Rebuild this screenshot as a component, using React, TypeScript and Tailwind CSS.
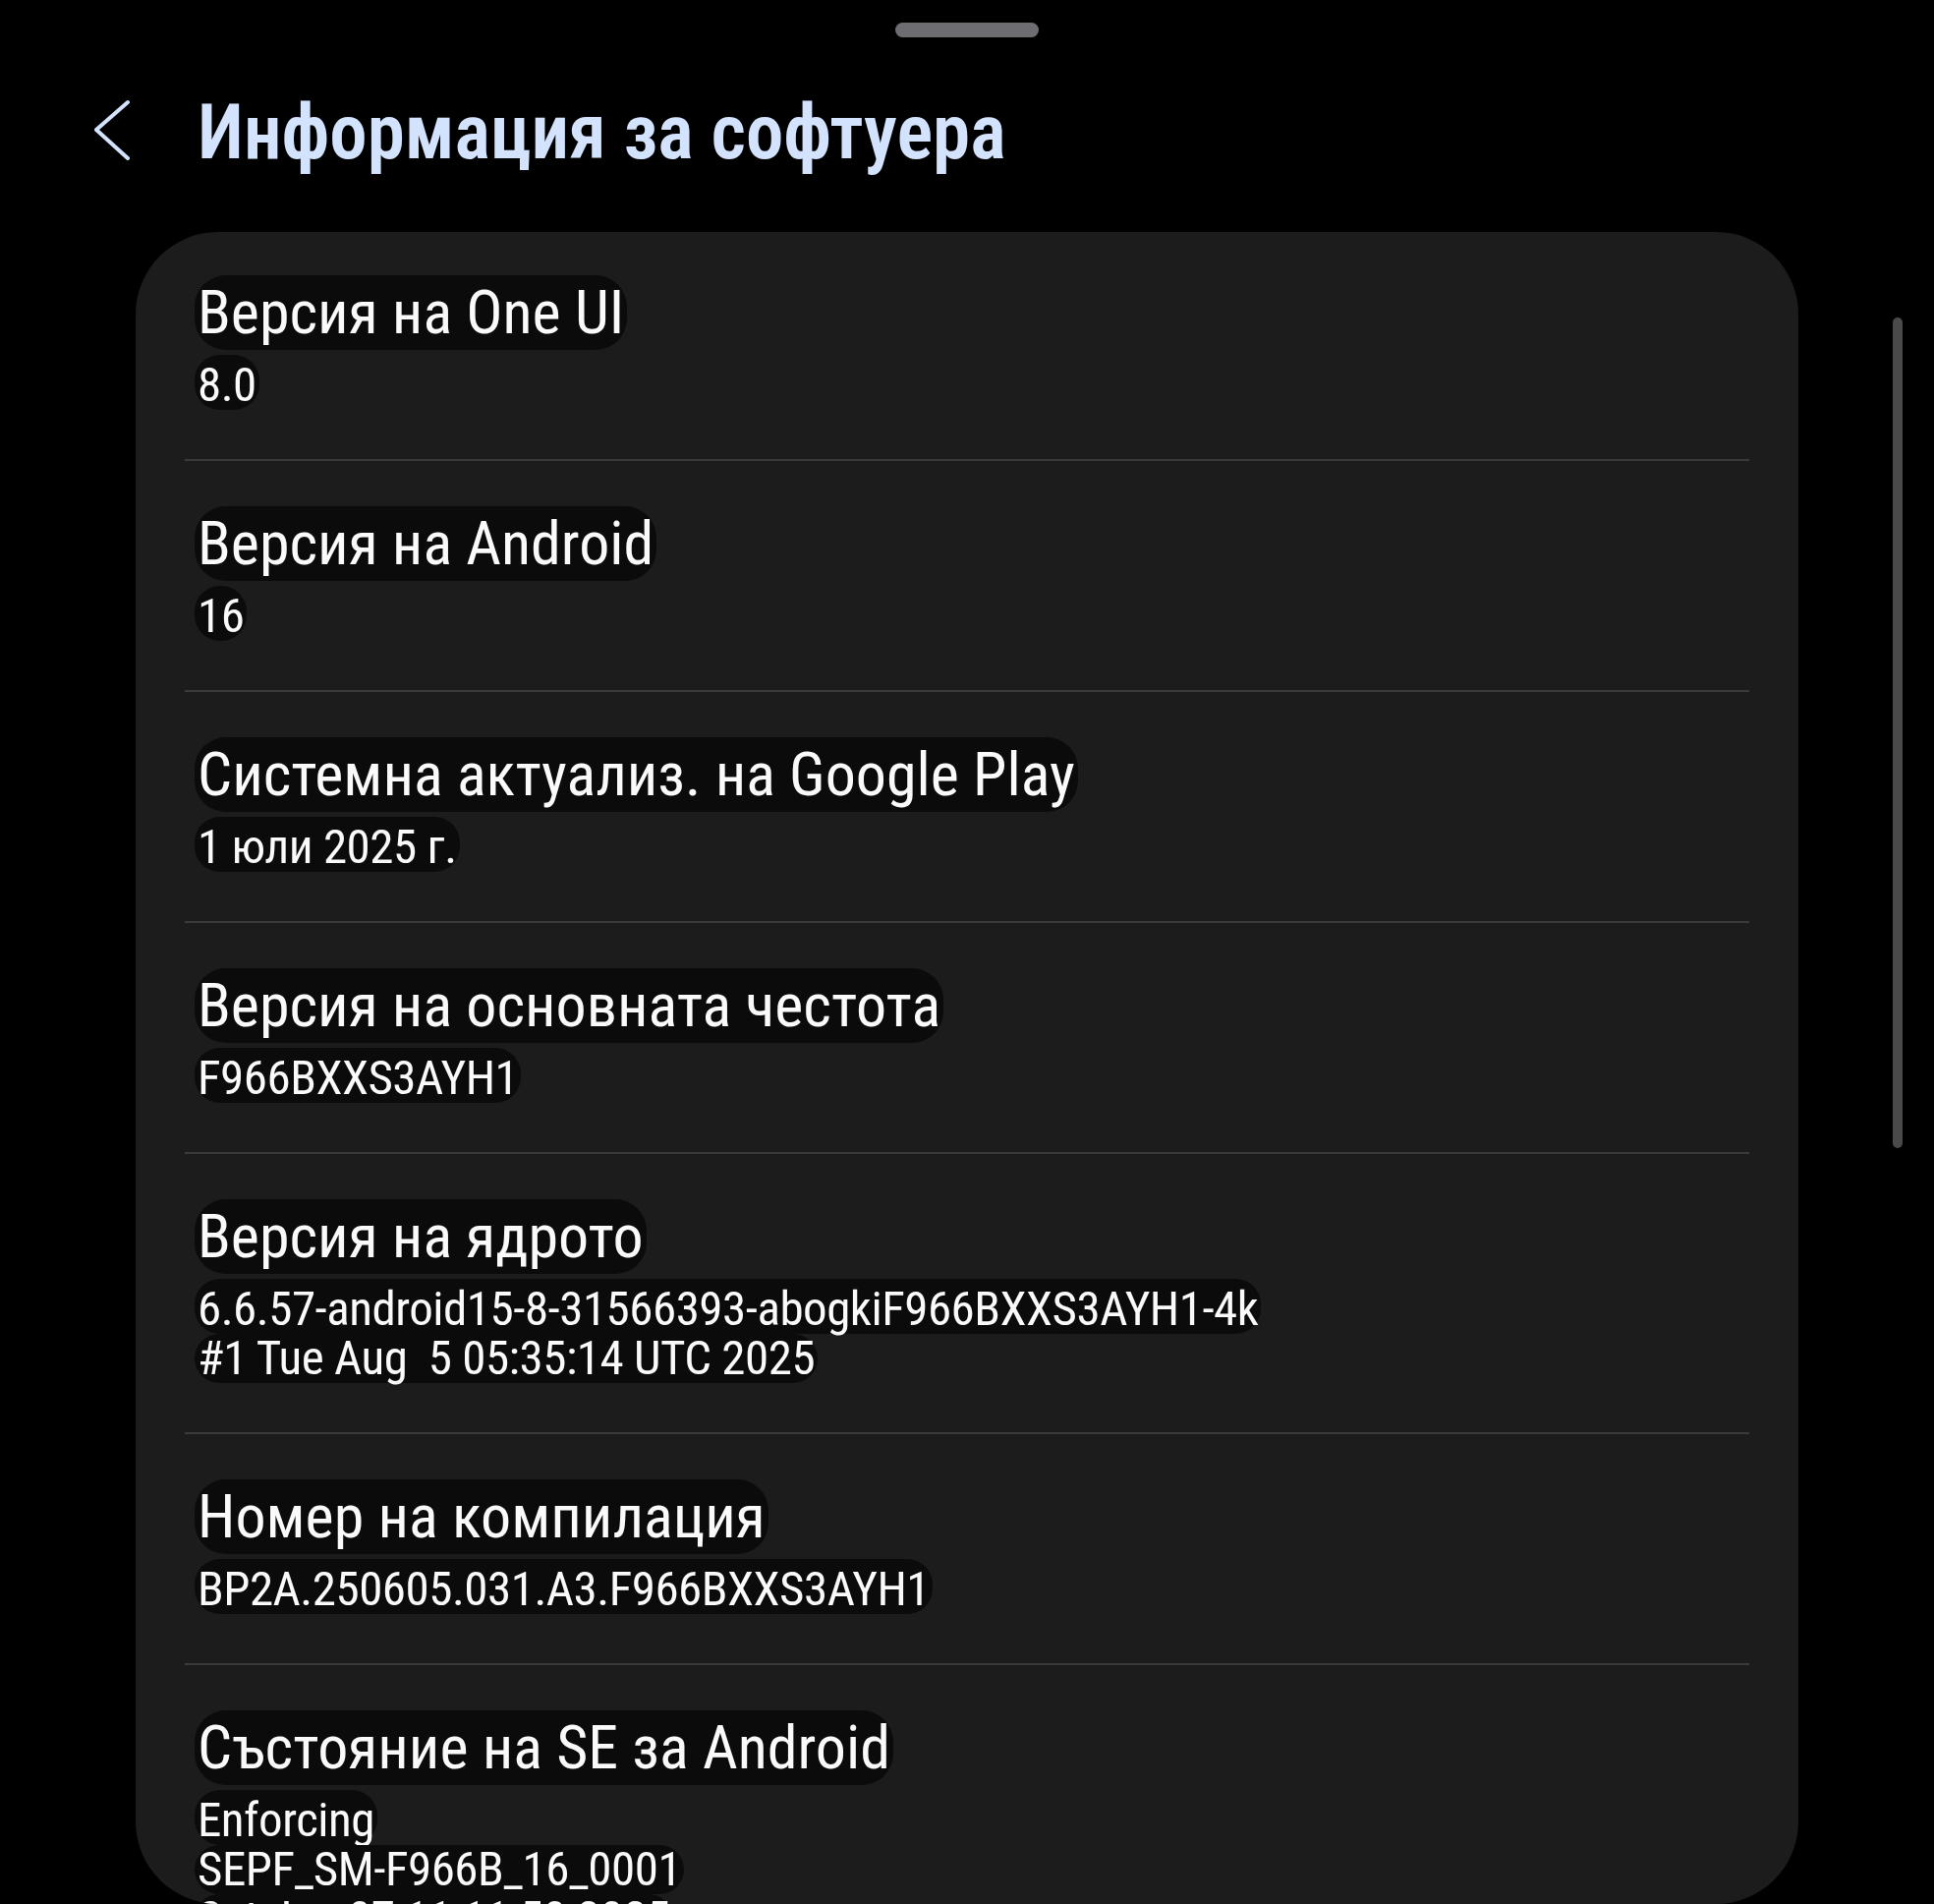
const font = { fontFamily: '"Roboto Condensed", "Roboto", sans-serif' };

interface InfoRow {
  title: string;
  lines: string[];
}

const rows: InfoRow[] = [
  { title: 'Версия на One UI', lines: ['8.0'] },
  { title: 'Версия на Android', lines: ['16'] },
  { title: 'Системна актуализ. на Google Play', lines: ['1 юли 2025 г.'] },
  { title: 'Версия на основната честота', lines: ['F966BXXS3AYH1'] },
  {
    title: 'Версия на ядрото',
    lines: ['6.6.57-android15-8-31566393-abogkiF966BXXS3AYH1-4k', '#1 Tue Aug  5 05:35:14 UTC 2025'],
  },
  { title: 'Номер на компилация', lines: ['BP2A.250605.031.A3.F966BXXS3AYH1'] },
  { title: 'Състояние на SE за Android', lines: ['Enforcing', 'SEPF_SM-F966B_16_0001', 'Sat Jun 07 11:11:50 2025'] },
];

const Row = ({ row, first, last }: { row: InfoRow; first: boolean; last: boolean }) => (
  <div className={`pl-[10px] pb-[50px] ${first ? 'pt-[44px]' : 'pt-[46px]'} ${last ? '' : 'border-b-2 border-[#3a3a3a]'}`}>
    <div className="flex">
      <span className="rounded-[32px] bg-[#0b0b0b] px-[3px] text-[62px] leading-[76px] text-[#fafafa]">
        {row.title}
      </span>
    </div>
    <div className="mt-[5px]">
      {row.lines.map((line, i) => (
        <div key={i} className="flex">
          <span
            className={`whitespace-pre rounded-[26px] bg-[#0b0b0b] px-[3px] text-[49px] leading-[50px] tracking-[-0.5px] text-[#fafafa] ${
              i === 0 ? 'pt-[6px]' : ''
            }`}
          >
            {line}
          </span>
        </div>
      ))}
    </div>
  </div>
);

export default function App() {
  return (
    <div lang="bg" className="relative h-[1937px] overflow-hidden bg-black" style={font}>
      {/* grab handle */}
      <div className="flex justify-center pt-[23px]">
        <div className="h-[15px] w-[146px] rounded-full bg-[#6e6e72]" />
      </div>

      {/* header */}
      <div className="mt-[47px] flex h-[100px] items-center">
        <svg className="ml-[96px] mt-[-6px] h-[62px] w-[38px]" viewBox="0 0 38 62" fill="none">
          <polyline
            points="34,3 2,31 34,60"
            stroke="#d3e3fd"
            strokeWidth="4"
            strokeLinecap="round"
            strokeLinejoin="round"
          />
        </svg>
        <h1 className="ml-[67px] text-[77px] font-semibold leading-[100px] text-[#d3e3fd]">Информация за софтуера</h1>
      </div>

      {/* card */}
      <div className="ml-[138px] mt-[51px] h-[1701px] w-[1692px] overflow-hidden rounded-[84px] bg-[#1c1c1c] px-[50px]">
        {rows.map((row, i) => (
          <Row key={row.title} row={row} first={i === 0} last={i === rows.length - 1} />
        ))}
      </div>

      {/* scrollbar */}
      <div className="absolute left-[1926px] top-[323px] h-[845px] w-[10px] rounded-full bg-[#4a4a4a]" />
    </div>
  );
}
